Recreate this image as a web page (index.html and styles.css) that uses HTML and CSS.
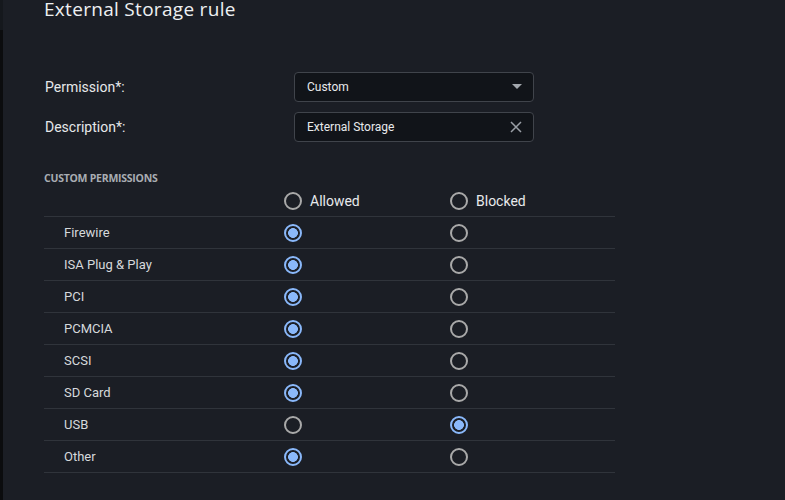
FILE: index.html
```html
<!DOCTYPE html>
<html>
<head>
<meta charset="utf-8">
<link rel="stylesheet" href="styles.css">
</head>
<body>
<div class="app">
  <div class="rail"><div class="rail-top"></div><div class="rail-bottom"></div></div>
  <main class="panel">
    <h1 class="title">External Storage rule</h1>
    <div class="form">
      <div class="field">
        <label class="field-label">Permission*:</label>
        <div class="control">
          <span class="control-text">Custom</span>
          <svg class="icon" width="10" height="6" viewBox="0 0 10 6"><path d="M0 0H10L5 5Z" fill="#a3a8ae"/></svg>
        </div>
      </div>
      <div class="field">
        <label class="field-label">Description*:</label>
        <div class="control">
          <span class="control-text">External Storage</span>
          <svg class="icon" width="12" height="12" viewBox="0 0 12 12"><path d="M1 1L11 11M11 1L1 11" stroke="#9a9fa6" stroke-width="1.5" fill="none"/></svg>
        </div>
      </div>
    </div>
    <h2 class="section">CUSTOM PERMISSIONS</h2>
    <div class="table">
      <div class="row head">
        <div class="cell"></div>
        <div class="cell"><span class="radio"></span><span class="head-text">Allowed</span></div>
        <div class="cell"><span class="radio"></span><span class="head-text">Blocked</span></div>
      </div>
      <div class="row"><div class="cell name">Firewire</div><div class="cell"><span class="radio on"></span></div><div class="cell"><span class="radio"></span></div></div>
      <div class="row"><div class="cell name">ISA Plug &amp; Play</div><div class="cell"><span class="radio on"></span></div><div class="cell"><span class="radio"></span></div></div>
      <div class="row"><div class="cell name">PCI</div><div class="cell"><span class="radio on"></span></div><div class="cell"><span class="radio"></span></div></div>
      <div class="row"><div class="cell name">PCMCIA</div><div class="cell"><span class="radio on"></span></div><div class="cell"><span class="radio"></span></div></div>
      <div class="row"><div class="cell name">SCSI</div><div class="cell"><span class="radio on"></span></div><div class="cell"><span class="radio"></span></div></div>
      <div class="row"><div class="cell name">SD Card</div><div class="cell"><span class="radio on"></span></div><div class="cell"><span class="radio"></span></div></div>
      <div class="row"><div class="cell name">USB</div><div class="cell"><span class="radio"></span></div><div class="cell"><span class="radio on"></span></div></div>
      <div class="row"><div class="cell name">Other</div><div class="cell"><span class="radio on"></span></div><div class="cell"><span class="radio"></span></div></div>
    </div>
  </main>
</div>
</body>
</html>
```

FILE: styles.css
```css
* { box-sizing: border-box; }
html, body { margin: 0; padding: 0; }
body {
  background: #1b1e25;
  font-family: Roboto, "Noto Sans", sans-serif;
  color: #e4e6e9;
  width: 785px;
  height: 500px;
  overflow: hidden;
}
.app { display: flex; height: 500px; }
.rail { width: 3px; display: flex; flex-direction: column; }
.rail-top { height: 30px; background: #15181d; }
.rail-bottom { flex: 1; background: #0b0c0e; }
.panel { flex: 1; padding-left: 41px; }
.title {
  margin: 0;
  font-family: "Open Sans", sans-serif;
  font-weight: 500;
  font-size: 19px;
  line-height: 18px;
  height: 18px;
  color: #eef0f2;
  letter-spacing: 0.3px;
}
.form { margin-top: 54px; display: flex; flex-direction: column; gap: 10px; }
.field { display: flex; align-items: center; height: 30px; }
.field-label {
  width: 250px;
  padding-left: 1px;
  font-size: 14px;
  color: #e6e8ea;
}
.control {
  width: 240px;
  height: 30px;
  background: #111419;
  border: 1px solid #40444b;
  border-radius: 4px;
  display: flex;
  align-items: center;
  justify-content: space-between;
  padding: 0 11px 0 12px;
}
.control-text { font-size: 12px; color: #e8eaec; }
.icon { display: block; }
.section {
  margin: 29px 0 0 0;
  font-family: "Open Sans", sans-serif;
  font-weight: 700;
  font-size: 10.5px;
  line-height: 14px;
  letter-spacing: -0.25px;
  color: #a9adb3;
}
.table { width: 571px; }
.row {
  display: grid;
  grid-template-columns: 240px 166px 1fr;
  height: 32px;
  border-bottom: 1px solid #30343b;
  align-items: center;
}
.cell { display: flex; align-items: center; }
.name { padding-left: 20px; font-size: 13px; color: #d6d9dc; }
.head-text { margin-left: 8px; font-size: 14px; color: #e8eaec; }
.radio {
  width: 18px;
  height: 18px;
  border-radius: 50%;
  border: 2px solid #a9a9a9;
  display: inline-block;
}
.radio.on {
  border-color: #8ab8fa;
  background: radial-gradient(circle, #8ab8fa 0 4.6px, #1b1e25 5.2px);
}
```
